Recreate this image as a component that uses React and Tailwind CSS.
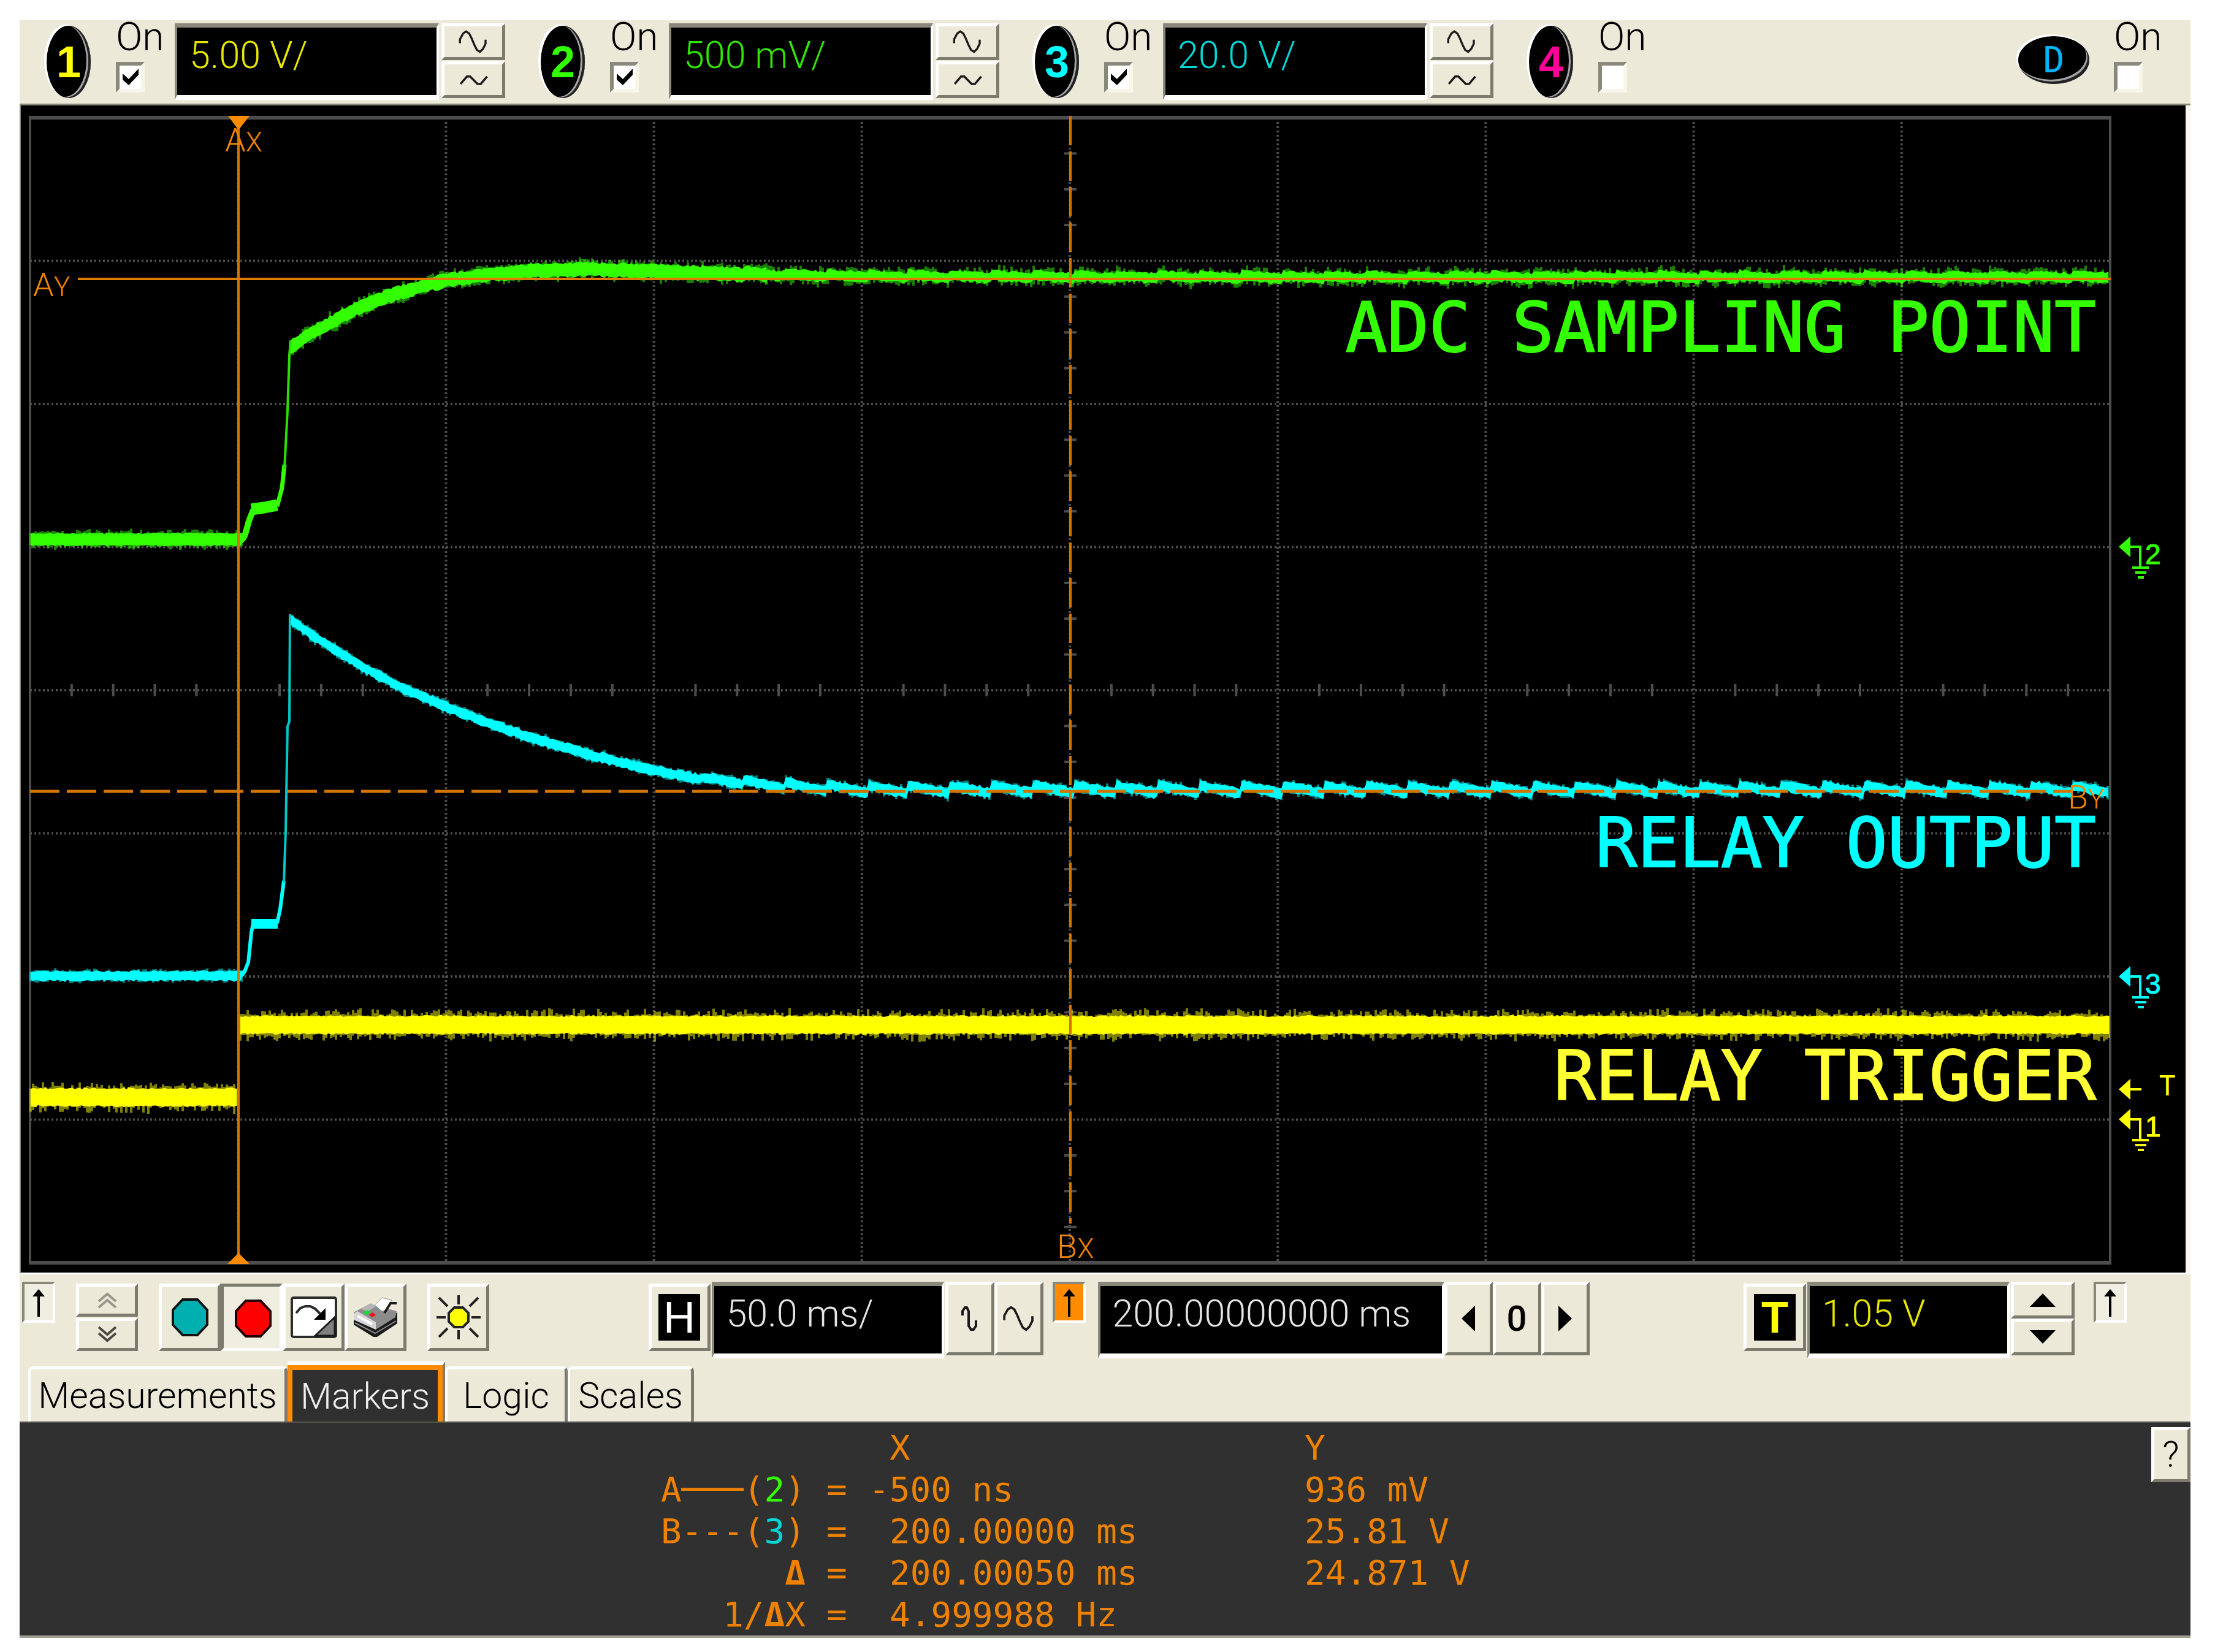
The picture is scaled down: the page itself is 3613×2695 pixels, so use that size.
import React from "react";

const CREAM = "bg-[#ece9d8]";
const RAISED =
  "bg-[#ece9d8] border-[5px] border-t-white border-l-white border-r-[#7d7a6e] border-b-[#7d7a6e]";
const SUNKEN =
  "border-t-[7px] border-l-[4px] border-r-[4px] border-b-[8px] border-t-[#8a887a] border-l-[#8a887a] border-r-white border-b-white";

/* ---------- controls ---------- */

function Field({ label, value, color, width }) {
  return (
    <input
      type="text"
      aria-label={label}
      defaultValue={value}
      className={`${SUNKEN} ${color} ${width} h-[125px] shrink-0 bg-black pl-5 pb-5 text-[61px] font-light leading-none outline-none`}
    />
  );
}

function Button({ label, className = "", pressed = false, children }) {
  const face = pressed
    ? "bg-[#f0eee1] border-[5px] border-t-[#7d7a6e] border-l-[#7d7a6e] border-r-white border-b-white"
    : RAISED;
  return (
    <button
      type="button"
      aria-label={label}
      className={`${face} ${className} flex shrink-0 items-center justify-center text-black`}
    >
      {children}
    </button>
  );
}

function Wave({ d, className }) {
  return (
    <svg viewBox="0 0 60 48" className={className} fill="none" stroke="#1a1a1a" strokeWidth="4">
      <path d={d} />
    </svg>
  );
}

const TALL_WAVE = "M4 27 V19 L10 8 L16 4 L22 8 L27 18 L32 30 L37 40 L43 44 L49 38 L54 28 V20";
const FLAT_WAVE = "M6 32 L18 18 H24 L38 32 H44 L56 18";

function OnCheck({ name, checked }) {
  return (
    <label className="flex w-[80px] shrink-0 flex-col items-start gap-3 text-[64px] font-light text-black">
      <span className="leading-[56px]">On</span>
      <span className="grid">
        <input
          type="checkbox"
          aria-label={name + " on"}
          defaultChecked={checked}
          className="peer col-start-1 row-start-1 h-[50px] w-[47px] appearance-none border-[6px] border-t-[#8a887a] border-l-[#8a887a] border-r-[#f8f6ea] border-b-[#f8f6ea] bg-white"
        />
        <svg
          viewBox="0 0 47 50"
          className="pointer-events-none invisible col-start-1 row-start-1 h-[50px] w-[47px] peer-checked:visible"
        >
          <path d="M11 19 L21 28 L37 11 V21 L21 38 L11 29 Z" fill="#000" />
        </svg>
      </span>
    </label>
  );
}

function Badge({ children, color }) {
  return (
    <span
      className={`${color} flex h-[118px] w-[72px] shrink-0 items-center justify-center rounded-[50%] bg-black font-['Liberation_Sans',sans-serif] text-[72px] font-bold leading-none shadow-[inset_-4px_-1px_0_#222,inset_-7px_-2px_0_#a5a5a5,-4px_-2px_0_#fff]`}
    >
      {children}
    </span>
  );
}

function Channel({ n, color, fieldColor, value, on }) {
  return (
    <div className={`${value ? "w-[806px]" : ""} flex shrink-0 items-start`}>
      <div className="pt-[9px]">
        <Badge color={color}>{n}</Badge>
      </div>
      <div className="ml-[41px]">
        <OnCheck name={"Channel " + n} checked={on} />
      </div>
      {value && (
        <div className="ml-4 flex items-start gap-1 pt-[5px]">
          <Field label={"Channel " + n + " scale"} value={value} color={fieldColor} width="w-[431px]" />
          <div className="flex flex-col gap-[2px]">
            <Button label={"Channel " + n + " scale up"} className="h-[60px] w-[104px]">
              <Wave d={TALL_WAVE} className="h-10 w-[58px]" />
            </Button>
            <Button label={"Channel " + n + " scale down"} className="h-[60px] w-[104px]">
              <Wave d={FLAT_WAVE} className="h-[44px] w-[52px]" />
            </Button>
          </div>
        </div>
      )}
    </div>
  );
}

function TopBar() {
  return (
    <header className={`${CREAM} flex h-[139px] items-start border-b-[3px] border-[#8a887a] pl-[44px] pr-[45px]`}>
      <Channel n="1" color="text-[#ffff00]" fieldColor="text-[#e6e600]" value="5.00 V/" on />
      <Channel n="2" color="text-[#33ff00]" fieldColor="text-[#2ee600]" value="500 mV/" on />
      <Channel n="3" color="text-[#00ffff]" fieldColor="text-[#00d8d8]" value="20.0 V/" on />
      <Channel n="4" color="text-[#ff0099]" on={false} />
      <div className="ml-auto flex items-start">
        <span className="mt-[26px] flex h-[78px] w-[116px] items-center justify-center rounded-[50%] bg-black font-['DejaVu_Sans_Mono',monospace] text-[58px] leading-none text-[#00b4ff] shadow-[inset_-3px_-4px_0_#222,inset_-5px_-7px_0_#a5a5a5,-3px_-3px_0_#fff]">
          D
        </span>
        <div className="ml-10">
          <OnCheck name="Digital" checked={false} />
        </div>
      </div>
    </header>
  );
}

/* ---------- oscilloscope display ---------- */

function makeRandom(seed) {
  let s = seed;
  return () => {
    s = (s * 1664525 + 1013904223) % 4294967296;
    return s / 4294967296;
  };
}

function interpolate(points, x) {
  for (let i = 1; i < points.length; i++) {
    if (x <= points[i][0]) {
      const [x0, y0] = points[i - 1];
      const [x1, y1] = points[i];
      return y0 + ((y1 - y0) * (x - x0)) / (x1 - x0);
    }
  }
  return points[points.length - 1][1];
}

/* A noisy trace: a solid core band and a fainter fringe round it. */
function band(fn, x0, x1, core, jitter, fringe, seed) {
  const rnd = makeRandom(seed);
  const up = [];
  const down = [];
  let halo = "";
  for (let x = x0; x <= x1; x += 4) {
    const y = fn(x);
    const a = y - core - rnd() * jitter;
    const b = y + core + rnd() * jitter;
    up.push(x + " " + a.toFixed(1));
    down.push(x + " " + b.toFixed(1));
    const r1 = rnd();
    const r2 = rnd();
    halo += `M${x} ${(a - r1 * r1 * fringe).toFixed(1)}V${(b + r2 * r2 * fringe).toFixed(1)}`;
  }
  return { core: "M" + up.join("L") + "L" + down.reverse().join("L") + "Z", halo };
}

const RIPPLE_START = 1143;
const RIPPLE_PERIOD = 67.8;
const ripple = (x) => {
  const phase = (((x - RIPPLE_START) % RIPPLE_PERIOD) + RIPPLE_PERIOD) % RIPPLE_PERIOD;
  return phase / RIPPLE_PERIOD - 0.5;
};

const GREEN_CURVE = [
  [473, 567], [500, 548], [531, 531], [580, 504], [630, 484], [697, 465], [730, 457],
  [796, 448], [871, 442], [954, 439], [1078, 443], [1161, 446], [1300, 449], [1500, 451], [1800, 452],
];
const CYAN_CURVE = [
  [473, 1010], [500, 1030], [539, 1056], [597, 1091], [663, 1126], [730, 1154], [796, 1180],
  [871, 1205], [954, 1229], [1061, 1256], [1128, 1268], [1202, 1275], [1281, 1282], [1400, 1287], [1500, 1288],
];
const settle = (x) => Math.min(1, Math.max(0, (x - 1080) / 200));
const greenY = (x) => interpolate(GREEN_CURVE, x) + ripple(x) * 5 * settle(x);
const cyanY = (x) => interpolate(CYAN_CURVE, x) + ripple(x) * 13 * settle(x);

const TRACES = [
  { color: "#33ff00", ...band(() => 880, 50, 394, 9, 2, 7, 11) },
  { color: "#33ff00", ...band(greenY, 474, 1250, 9, 4, 7, 23) },
  { color: "#33ff00", ...band(greenY, 1250, 3440, 6, 4, 9, 29) },
  { color: "#00ffff", ...band(() => 1592, 50, 394, 6, 3, 4, 31) },
  { color: "#00ffff", ...band(cyanY, 474, 3440, 6, 4, 4, 47) },
  { color: "#ffff00", ...band(() => 1790, 50, 388, 13, 3, 12, 59) },
  { color: "#ffff00", ...band(() => 1672, 392, 3440, 13, 3, 12, 61) },
];

const LEFT = 49;
const TOP = 192;
const DIV_X = 339.2;
const DIV_Y = 233.5;
const range = (a, b) => Array.from({ length: b - a + 1 }, (_, i) => a + i);

function Graticule() {
  return (
    <g stroke="#4d4d4d" fill="none">
      <g strokeWidth="4" strokeDasharray="3 4">
        {range(1, 9).map((i) => (
          <path key={"v" + i} d={`M${LEFT + DIV_X * i} ${TOP}V2060`} />
        ))}
        {range(1, 7).map((i) => (
          <path key={"h" + i} d={`M${LEFT} ${TOP + DIV_Y * i}H3442`} />
        ))}
      </g>
      <g strokeWidth="4">
        {range(1, 49).filter((i) => i % 5).map((i) => (
          <path key={"tx" + i} d={`M${LEFT + (DIV_X / 5) * i} 1116V1136`} />
        ))}
        {range(1, 31).filter((i) => i % 4).map((i) => (
          <path key={"ty" + i} d={`M1736 ${TOP + (DIV_Y / 4) * i}H1756`} />
        ))}
      </g>
      <path d="M49 192V2060M3442 192V2060" strokeWidth="4" />
      <path d="M47 192H3444M47 2060H3444" strokeWidth="6" />
    </g>
  );
}

function Ground({ y, color, n }) {
  return (
    <g fill={color} stroke="none">
      <path d={`M3456 ${y}L3475 ${y - 17}V${y + 17}Z`} />
      <path
        d={`M3475 ${y}H3491V${y + 34}M3478 ${y + 34}H3505M3483 ${y + 42}H3501M3487 ${y + 50}H3497`}
        fill="none"
        stroke={color}
        strokeWidth="4"
      />
      <text x="3499" y={y + 28} className="font-['Liberation_Sans',sans-serif] text-[46px]" stroke={color} strokeWidth="1">
        {n}
      </text>
    </g>
  );
}

function CursorName({ x, y, axis, name }) {
  return (
    <text x={x} y={y} fill="#f08300" className="font-['Roboto',sans-serif] text-[54px] font-light">
      {name}
      <tspan className="text-[44px]">{axis}</tspan>
    </text>
  );
}

function Scope() {
  return (
    <main className="border-r-[8px] border-b-[3px] border-l-[2px] border-r-[#f8f6ee] border-b-white border-l-[#8a887a] bg-black">
      <svg viewBox="34 172 3531 1904" className="block h-auto w-full" role="img" aria-label="Oscilloscope traces">
        <Graticule />
        {TRACES.map((t, i) => (
          <g key={i}>
            <path d={t.halo} stroke={t.color} strokeOpacity="0.5" strokeWidth="4" />
            <path d={t.core} fill={t.color} />
          </g>
        ))}
        <g fill="none" strokeLinejoin="round">
          <path d="M390 883C400 880 401 866 406 850L413 832" stroke="#33ff00" strokeWidth="10" />
          <path d="M410 831L431 828L452 824" stroke="#33ff00" strokeWidth="19" />
          <path d="M452 826L460 796L464 758" stroke="#33ff00" strokeWidth="7" />
          <path d="M464 765L469 669L472 580L474 556" stroke="#2be000" strokeWidth="4" />
          <path d="M390 1594C400 1590 402 1575 405 1570L410 1521L413 1506" stroke="#00ffff" strokeWidth="6" />
          <path d="M410 1507H453" stroke="#00ffff" strokeWidth="16" />
          <path d="M452 1506L457 1483L463 1437" stroke="#00ffff" strokeWidth="6" />
          <path d="M463 1440L466 1356L469 1185L472 1177L473 1002" stroke="#00c8c8" strokeWidth="4" />
        </g>

        <g fill="none" stroke="#d27400" strokeWidth="4">
          <path d="M389 192V2060" />
          <path d="M1746 189V1996" strokeDasharray="48 10" />
          <path d="M127 455H3443" stroke="#e07b00" />
          <path d="M49 1291H3378" strokeWidth="5" strokeDasharray="48 12" />
        </g>
        <path d="M372 189H407L389 212ZM371 2062H407L389 2044Z" fill="#ff8c00" />
        <CursorName x={367} y={247} name="A" axis="X" />
        <CursorName x={54} y={483} name="A" axis="Y" />
        <CursorName x={1724} y={2052} name="B" axis="X" />
        <CursorName x={3373} y={1319} name="B" axis="Y" />

        <g textAnchor="end" className="font-['DejaVu_Sans_Mono',monospace] text-[113px]">
          <text x="3419" y="573" fill="#33ff00" stroke="#33ff00" strokeWidth="2">ADC SAMPLING POINT</text>
          <text x="3419" y="1414" fill="#00ffff" stroke="#00ffff" strokeWidth="2">RELAY OUTPUT</text>
          <text x="3419" y="1794" fill="#ffff33" stroke="#ffff33" strokeWidth="2">RELAY TRIGGER</text>
        </g>

        <Ground y={892} color="#33ff00" n="2" />
        <Ground y={1593} color="#00ffff" n="3" />
        <Ground y={1826} color="#ffff00" n="1" />
        <path d="M3456 1777L3475 1760V1794Z" fill="#ffff00" />
        <path d="M3475 1777H3493" stroke="#ffff00" strokeWidth="4" />
        <text x="3522" y="1787" fill="#ffff00" className="font-['DejaVu_Sans_Mono',monospace] text-[44px]">T</text>
      </svg>
    </main>
  );
}

/* ---------- toolbar ---------- */

function EdgeMark({ label, orange = false }) {
  return (
    <button
      type="button"
      aria-label={label}
      className={`${orange ? "bg-[#ff8c00]" : "bg-[#f0eee1]"} flex h-[67px] w-[54px] shrink-0 items-center justify-center border-[4px] border-t-[#8a887a] border-l-[#8a887a] border-r-white border-b-white`}
    >
      <svg viewBox="0 0 24 48" className="h-12 w-6">
        <path d="M12 2L22 14H14V47H10V14H2Z" fill="#000" />
      </svg>
    </button>
  );
}

const OCTAGON = "M19 3H43L59 20V44L43 61H19L3 44V20Z";

function Letter({ children, color }) {
  return (
    <span
      className={`${color} flex h-[76px] w-[68px] items-center justify-center bg-black font-['Liberation_Sans',sans-serif] text-[72px] leading-none`}
    >
      {children}
    </span>
  );
}

function Chevrons({ down = false, color }) {
  return (
    <svg viewBox="0 0 34 28" className="h-7 w-[34px]" fill="none" stroke={color} strokeWidth="4">
      <path d={down ? "M3 2L17 14L31 2M3 12L17 24L31 12" : "M3 16L17 4L31 16M3 26L17 14L31 26"} />
    </svg>
  );
}

function PageIcon() {
  return (
    <svg viewBox="0 0 76 68" className="h-[68px] w-[76px]">
      <rect x="2" y="2" width="72" height="64" rx="3" fill="#fff" stroke="#2b2b2b" strokeWidth="4" />
      <path d="M40 64L72 34V64Z" fill="#808080" stroke="#1a1a1a" strokeWidth="3" />
      <path d="M9 27L16 19L24 16H32L40 20L48 28" fill="none" stroke="#2b2b2b" strokeWidth="4" />
      <path d="M57 19V38H38Z" fill="#000" />
    </svg>
  );
}

function PrinterIcon() {
  return (
    <svg viewBox="0 0 76 68" className="h-[68px] w-[76px]">
      <path d="M2 34L38 52L73 26V44L40 66H34L2 46Z" fill="#1a1a1a" />
      <path d="M4 43L37 60L71 40" stroke="#8a8a8a" strokeWidth="2" fill="none" />
      <path d="M2 26L28 12L72 24L70 34L38 54L2 38Z" fill="#8c8c8c" />
      <path d="M2 28L8 24L38 42L38 54L2 38Z" fill="#d6d6d6" />
      <path d="M8 32L32 45" stroke="#fff" strokeWidth="4" />
      <path d="M14 20L30 11L38 16L24 25Z" fill="#b5b5b5" />
      <path d="M36 14L48 2L64 6L54 23L48 24Z" fill="#fff" stroke="#8c8c8c" strokeWidth="1" />
      <path d="M72 11H62L52 27" stroke="#1a1a1a" strokeWidth="4" fill="none" />
      <path d="M18 26L25 22L29 26L22 30Z" fill="#00e820" />
      <path d="M27 30L33 26L38 30L32 34Z" fill="#f01010" />
    </svg>
  );
}

function SunIcon() {
  return (
    <svg viewBox="0 0 74 74" className="h-[74px] w-[74px]" stroke="#222" strokeWidth="4">
      <path d="M37 1V16M37 58V73M1 37H16M58 37H73M5 5L19 19M69 5L55 19M5 69L19 55M69 69L55 55" />
      <path d="M30 21H44L53 30V44L44 53H30L21 44V30Z" fill="#ffff00" />
    </svg>
  );
}

function Triangle({ d, box, className }) {
  return (
    <svg viewBox={box} className={className}>
      <path d={d} fill="#000" />
    </svg>
  );
}

function Toolbar() {
  return (
    <div className={`${CREAM} flex h-[142px] items-start justify-between pl-1 pr-[104px] pt-[12px]`}>
      <div className="flex items-start">
        <EdgeMark label="Left reference" />
        <div className="ml-[34px] mt-[3px] flex flex-col gap-[2px]">
          <Button label="Previous" className="h-[54px] w-[101px]">
            <Chevrons color="#9a988c" />
          </Button>
          <Button label="Next" className="h-[54px] w-[101px]">
            <Chevrons down color="#4a4944" />
          </Button>
        </div>
        <div className="ml-[34px] mt-[3px] flex">
          <Button label="Run" className="h-[110px] w-[101px]">
            <svg viewBox="0 0 62 64" className="h-16 w-[62px]">
              <path d={OCTAGON} fill="#00b0b0" stroke="#111" strokeWidth="4" />
            </svg>
          </Button>
          <Button label="Stop" pressed className="h-[110px] w-[101px] pl-1 pt-1">
            <svg viewBox="0 0 62 64" className="h-16 w-[62px]">
              <path d={OCTAGON} fill="#ff0000" stroke="#200000" strokeWidth="4" />
            </svg>
          </Button>
          <Button label="Clear display" className="h-[110px] w-[101px]">
            <PageIcon />
          </Button>
          <Button label="Print" className="h-[110px] w-[101px]">
            <PrinterIcon />
          </Button>
        </div>
        <div className="ml-[34px] mt-[3px]">
          <Button label="Intensity" className="h-[110px] w-[101px]">
            <SunIcon />
          </Button>
        </div>
      </div>

      <div className="ml-2 flex items-start">
        <Button label="Horizontal setup" className="mt-[3px] h-[110px] w-[101px]">
          <Letter color="text-white">H</Letter>
        </Button>
        <div className="ml-[2px]">
          <Field label="Time per division" value="50.0 ms/" color="text-[#e4e4e4]" width="w-[379px]" />
        </div>
        <div className="ml-[2px] flex">
          <Button label="Zoom in time" className="h-[120px] w-[80px]">
            <svg viewBox="0 0 30 42" className="h-[42px] w-[30px]" fill="none" stroke="#1a1a1a" strokeWidth="4">
              <path d="M3 16V9L7 3H10L13 9V33L17 39H21L25 33V24" />
            </svg>
          </Button>
          <Button label="Zoom out time" className="h-[120px] w-[80px]">
            <Wave d={TALL_WAVE} className="h-11 w-[58px]" />
          </Button>
        </div>
        <div className="ml-[15px]">
          <EdgeMark label="Delay reference" orange />
        </div>
        <div className="ml-[20px]">
          <Field label="Delay" value="200.00000000 ms" color="text-[#e4e4e4]" width="w-[565px]" />
        </div>
        <div className="flex">
          <Button label="Move left" className="h-[120px] w-[79px]">
            <Triangle box="0 0 24 44" d="M23 1V43L1 22Z" className="h-11 w-6" />
          </Button>
          <Button label="Zero delay" className="h-[120px] w-[79px]">
            <span className="text-[58px] font-medium leading-none">0</span>
          </Button>
          <Button label="Move right" className="h-[120px] w-[79px]">
            <Triangle box="0 0 24 44" d="M1 1V43L23 22Z" className="h-11 w-6" />
          </Button>
        </div>
      </div>

      <div className="flex items-start">
        <Button label="Trigger setup" className="mt-[3px] h-[110px] w-[102px]">
          <Letter color="text-[#ffff00] font-bold">T</Letter>
        </Button>
        <div className="ml-[2px]">
          <Field label="Trigger level" value="1.05 V" color="text-[#e6e600]" width="w-[330px]" />
        </div>
        <div className="ml-[2px] flex flex-col">
          <Button label="Level up" className="h-[60px] w-[104px]">
            <Triangle box="0 0 44 24" d="M1 23H43L22 1Z" className="h-6 w-11" />
          </Button>
          <Button label="Level down" className="h-[60px] w-[104px]">
            <Triangle box="0 0 44 24" d="M1 1H43L22 23Z" className="h-6 w-11" />
          </Button>
        </div>
        <div className="ml-[31px]">
          <EdgeMark label="Right reference" />
        </div>
      </div>
    </div>
  );
}

/* ---------- tabs and results ---------- */

function Tab({ children, width }) {
  return (
    <button
      type="button"
      role="tab"
      aria-selected="false"
      className={`${CREAM} ${width} h-[90px] rounded-t-[8px] border-t-[5px] border-l-[4px] border-r-[5px] border-t-white border-l-white border-r-[#7d7a6e] text-[59px] font-light leading-none text-black`}
    >
      {children}
    </button>
  );
}

function Tabs() {
  return (
    <div role="tablist" className={`${CREAM} flex items-end border-b-[2px] border-[#55544e] pl-[14px]`}>
      <Tab width="w-[423px]">Measurements</Tab>
      <div className="border-t-[6px] border-r-[4px] border-t-white border-r-[#7d7a6e]">
        <button
          type="button"
          role="tab"
          aria-selected="true"
          className="block h-[92px] w-[253px] border-x-[8px] border-t-[8px] border-[#ff8c00] bg-[#303030] text-[59px] font-light leading-none text-[#ececec]"
        >
          Markers
        </button>
      </div>
      <Tab width="w-[200px]">Logic</Tab>
      <Tab width="w-[206px]">Scales</Tab>
    </div>
  );
}

const ROWS = [
  { label: <>A───(<span className="text-[#33ff00]">2</span>)</>, x: "-500 ns", y: "936 mV", minus: true },
  { label: <>B---(<span className="text-[#00d8d8]">3</span>)</>, x: "200.00000 ms", y: "25.81 V" },
  { label: <b>Δ</b>, x: "200.00050 ms", y: "24.871 V" },
  { label: <>1/<b>Δ</b>X</>, x: "4.999988 Hz", y: "" },
];

function Results() {
  return (
    <section className="flex items-start justify-between border-b-[4px] border-[#a09e92] bg-[#303030] pt-[7px]">
      <table className="ml-[1045px] table-fixed border-collapse text-left font-['DejaVu_Sans_Mono',monospace] text-[56px] leading-[68px] text-[#ee8200]">
        <thead>
          <tr>
            <td className="w-[237px] p-0" />
            <td className="w-[103px] p-0" />
            <th className="w-[711px] p-0 pl-[34px] font-normal">X</th>
            <th className="w-[340px] p-0 font-normal">Y</th>
          </tr>
        </thead>
        <tbody>
          {ROWS.map((r, i) => (
            <tr key={i}>
              <th className="p-0 text-right font-normal">{r.label}</th>
              <td className="p-0 pl-[34px]">=</td>
              <td className={r.minus ? "p-0" : "p-0 pl-[34px]"}>{r.x}</td>
              <td className="p-0">{r.y}</td>
            </tr>
          ))}
        </tbody>
      </table>
      <Button label="Help" className="h-[90px] w-[64px]">
        <span className="text-[60px] font-light leading-none">?</span>
      </Button>
    </section>
  );
}

export default function App() {
  return (
    <div className="bg-white pb-[27px] pl-[32px] pr-[40px] pt-[33px] font-['Roboto',sans-serif]">
      <TopBar />
      <Scope />
      <Toolbar />
      <Tabs />
      <Results />
    </div>
  );
}
